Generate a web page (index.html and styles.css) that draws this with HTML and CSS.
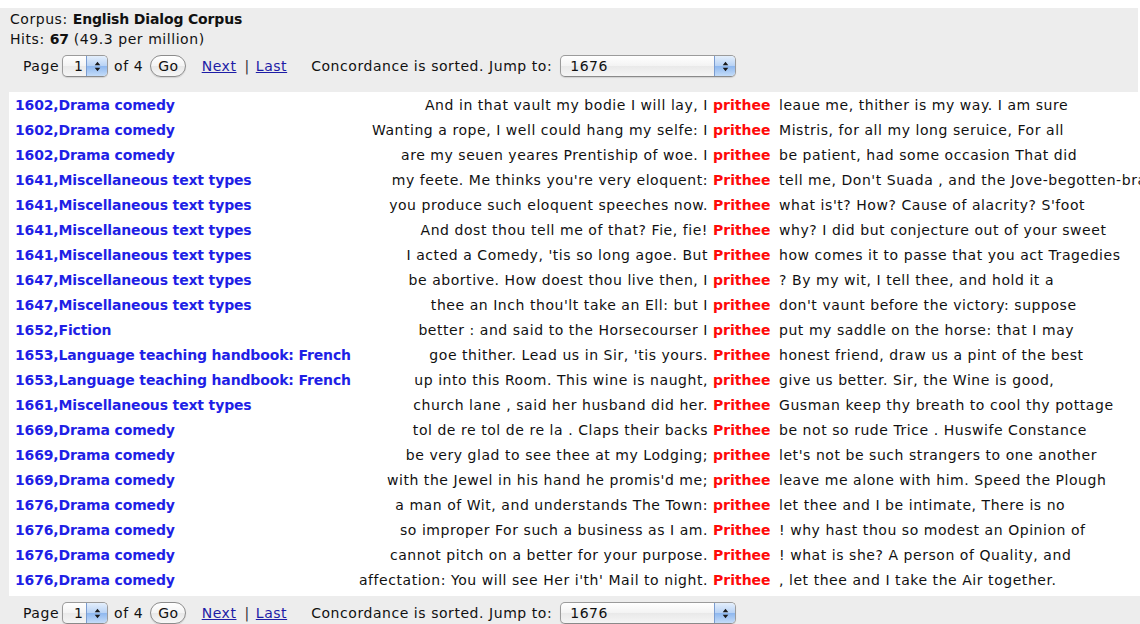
FILE: index.html
```html
<!DOCTYPE html>
<html lang="en">
<head>
<meta charset="utf-8">
<title>Concordance: prithee</title>
<link rel="stylesheet" href="styles.css">
</head>
<body>
<div class="summary">
  <div class="meta">Corpus: <b>English Dialog Corpus</b></div>
  <div class="meta">Hits: <b>67</b> (49.3 per million)</div>
  <div class="pager">
    <span>Page</span>
    <span class="select select-page"><span class="select-value">1</span><span class="select-spin"><svg width="7" height="11" viewBox="0 0 7 11"><path d="M3.5 0.8 L6.3 4.2 H0.7Z M0.7 6.8 H6.3 L3.5 10.2Z" fill="#1a1a1a"/></svg></span></span>
    <span class="of">of 4</span>
    <span class="btn-go">Go</span>
    <a class="nav nav-next" href="#next">Next</a>
    <span class="sep">|</span>
    <a class="nav" href="#last">Last</a>
    <span class="sorted">Concordance is sorted. Jump to:</span>
    <span class="select select-jump"><span class="select-value">1676</span><span class="select-spin"><svg width="7" height="11" viewBox="0 0 7 11"><path d="M3.5 0.8 L6.3 4.2 H0.7Z M0.7 6.8 H6.3 L3.5 10.2Z" fill="#1a1a1a"/></svg></span></span>
  </div>
</div>

<div class="results">
  <div class="sheet">
    <table class="kwic">
      <colgroup>
        <col class="c-src"><col class="c-left"><col class="c-kw"><col class="c-right">
      </colgroup>
      <tbody>
        <tr><td class="src"><a href="#">1602,Drama comedy</a></td><td class="left">And in that vault my bodie I will lay, I</td><td class="kw">prithee</td><td class="right">leaue me, thither is my way. I am sure</td></tr>
        <tr><td class="src"><a href="#">1602,Drama comedy</a></td><td class="left">Wanting a rope, I well could hang my selfe: I</td><td class="kw">prithee</td><td class="right">Mistris, for all my long seruice, For all</td></tr>
        <tr><td class="src"><a href="#">1602,Drama comedy</a></td><td class="left">are my seuen yeares Prentiship of woe. I</td><td class="kw">prithee</td><td class="right">be patient, had some occasion That did</td></tr>
        <tr><td class="src"><a href="#">1641,Miscellaneous text types</a></td><td class="left">my feete. Me thinks you're very eloquent:</td><td class="kw">Prithee</td><td class="right">tell me, Don't Suada , and the Jove-begotten-brain</td></tr>
        <tr><td class="src"><a href="#">1641,Miscellaneous text types</a></td><td class="left">you produce such eloquent speeches now.</td><td class="kw">Prithee</td><td class="right">what is't? How? Cause of alacrity? S'foot</td></tr>
        <tr><td class="src"><a href="#">1641,Miscellaneous text types</a></td><td class="left">And dost thou tell me of that? Fie, fie!</td><td class="kw">Prithee</td><td class="right">why? I did but conjecture out of your sweet</td></tr>
        <tr><td class="src"><a href="#">1641,Miscellaneous text types</a></td><td class="left">I acted a Comedy, 'tis so long agoe. But</td><td class="kw">Prithee</td><td class="right">how comes it to passe that you act Tragedies</td></tr>
        <tr><td class="src"><a href="#">1647,Miscellaneous text types</a></td><td class="left">be abortive. How doest thou live then, I</td><td class="kw">prithee</td><td class="right">? By my wit, I tell thee, and hold it a</td></tr>
        <tr><td class="src"><a href="#">1647,Miscellaneous text types</a></td><td class="left">thee an Inch thou'lt take an Ell: but I</td><td class="kw">prithee</td><td class="right">don't vaunt before the victory: suppose</td></tr>
        <tr><td class="src"><a href="#">1652,Fiction</a></td><td class="left">better : and said to the Horsecourser I</td><td class="kw">prithee</td><td class="right">put my saddle on the horse: that I may</td></tr>
        <tr><td class="src"><a href="#">1653,Language teaching handbook: French</a></td><td class="left">goe thither. Lead us in Sir, 'tis yours.</td><td class="kw">Prithee</td><td class="right">honest friend, draw us a pint of the best</td></tr>
        <tr><td class="src"><a href="#">1653,Language teaching handbook: French</a></td><td class="left">up into this Room. This wine is naught,</td><td class="kw">prithee</td><td class="right">give us better. Sir, the Wine is good,</td></tr>
        <tr><td class="src"><a href="#">1661,Miscellaneous text types</a></td><td class="left">church lane , said her husband did her.</td><td class="kw">Prithee</td><td class="right">Gusman keep thy breath to cool thy pottage</td></tr>
        <tr><td class="src"><a href="#">1669,Drama comedy</a></td><td class="left">tol de re tol de re la . Claps their backs</td><td class="kw">Prithee</td><td class="right">be not so rude Trice . Huswife Constance</td></tr>
        <tr><td class="src"><a href="#">1669,Drama comedy</a></td><td class="left">be very glad to see thee at my Lodging;</td><td class="kw">prithee</td><td class="right">let's not be such strangers to one another</td></tr>
        <tr><td class="src"><a href="#">1669,Drama comedy</a></td><td class="left">with the Jewel in his hand he promis'd me;</td><td class="kw">prithee</td><td class="right">leave me alone with him. Speed the Plough</td></tr>
        <tr><td class="src"><a href="#">1676,Drama comedy</a></td><td class="left">a man of Wit, and understands The Town:</td><td class="kw">prithee</td><td class="right">let thee and I be intimate, There is no</td></tr>
        <tr><td class="src"><a href="#">1676,Drama comedy</a></td><td class="left">so improper For such a business as I am.</td><td class="kw">Prithee</td><td class="right">! why hast thou so modest an Opinion of</td></tr>
        <tr><td class="src"><a href="#">1676,Drama comedy</a></td><td class="left">cannot pitch on a better for your purpose.</td><td class="kw">Prithee</td><td class="right">! what is she? A person of Quality, and</td></tr>
        <tr><td class="src"><a href="#">1676,Drama comedy</a></td><td class="left">affectation: You will see Her i'th' Mail to night.</td><td class="kw">Prithee</td><td class="right">, let thee and I take the Air together.</td></tr>
      </tbody>
    </table>
  </div>
</div>

<div class="footer">
  <div class="pager">
    <span>Page</span>
    <span class="select select-page"><span class="select-value">1</span><span class="select-spin"><svg width="7" height="11" viewBox="0 0 7 11"><path d="M3.5 0.8 L6.3 4.2 H0.7Z M0.7 6.8 H6.3 L3.5 10.2Z" fill="#1a1a1a"/></svg></span></span>
    <span class="of">of 4</span>
    <span class="btn-go">Go</span>
    <a class="nav nav-next" href="#next">Next</a>
    <span class="sep">|</span>
    <a class="nav" href="#last">Last</a>
    <span class="sorted">Concordance is sorted. Jump to:</span>
    <span class="select select-jump"><span class="select-value">1676</span><span class="select-spin"><svg width="7" height="11" viewBox="0 0 7 11"><path d="M3.5 0.8 L6.3 4.2 H0.7Z M0.7 6.8 H6.3 L3.5 10.2Z" fill="#1a1a1a"/></svg></span></span>
  </div>
</div>
</body>
</html>
```

FILE: styles.css
```css
html, body {
  overflow: hidden;
}

body {
  margin: 8px 0 0 0;
  background: #ffffff;
  color: #111111;
  font-family: "DejaVu Sans", Verdana, sans-serif;
  font-size: 14px;
  letter-spacing: 0.55px;
}

b {
  letter-spacing: -0.15px;
}

/* corpus summary block */
.summary {
  width: 1138px;
  box-sizing: border-box;
  background: #ededed;
  padding: 1px 0 15px 10px;
}

.meta {
  line-height: 20px;
  white-space: nowrap;
}

/* paging controls */
.pager {
  display: flex;
  align-items: center;
  height: 22px;
  line-height: 20px;
  white-space: nowrap;
}

.summary .pager {
  margin: 6px 0 0 13px;
}

.footer {
  background: #ededed;
  width: 1200px;
  padding: 6px 0 10px 23px;
}

.select {
  display: inline-flex;
  height: 22px;
  box-sizing: border-box;
  border: 1px solid #9b9b9b;
  border-bottom-color: #8a8a8a;
  border-radius: 5px;
  background: linear-gradient(#ffffff, #f3f3f3 50%, #e9e9e9 51%, #f5f5f5);
  box-shadow: 0 1px 1px rgba(0, 0, 0, 0.12);
  overflow: hidden;
  margin-left: 3px;
}

.select-page {
  width: 46px;
}

.select-jump {
  width: 176px;
  margin-left: 8px;
}

.select-value {
  flex: 1;
  padding-left: 11px;
  line-height: 20px;
}

.select-jump .select-value {
  padding-left: 9px;
}

.select-spin {
  width: 20px;
  display: flex;
  align-items: center;
  justify-content: center;
  border-left: 1px solid #7a9cd0;
  background: linear-gradient(#e4effc, #b9d3f5 48%, #8fb8ef 52%, #c4dcf8);
}

.of {
  margin-left: 6px;
}

.btn-go {
  margin-left: 7px;
  height: 22px;
  box-sizing: border-box;
  padding: 0 6px 0 7px;
  border: 1px solid #8c8c8c;
  border-radius: 11px;
  background: linear-gradient(#ffffff, #f4f4f4 50%, #e8e8e8 51%, #f7f7f7);
  box-shadow: 0 1px 1px rgba(0, 0, 0, 0.12);
  line-height: 20px;
}

.nav {
  color: #1d1da6;
  text-decoration: underline;
}

.nav-next {
  margin-left: 16px;
}

.sep {
  margin: 0 6px 0 8px;
  color: #333333;
}

.sorted {
  margin-left: 24px;
}

/* concordance lines */
.results {
  background: #ededed;
  padding-left: 9px;
  width: 1200px;
}

.sheet {
  background: #ffffff;
  padding: 1px 0 3px 0;
}

.kwic {
  border-collapse: collapse;
  table-layout: fixed;
  width: 1171px;
}

.c-src { width: 345px; }
.c-left { width: 356px; }
.c-kw { width: 66px; }
.c-right { width: 404px; }

.kwic td {
  height: 25px;
  padding: 0;
  line-height: 25px;
  white-space: nowrap;
  vertical-align: middle;
}

.kwic td.src {
  padding-left: 6px;
}

.kwic td.src a {
  color: #1f1fe6;
  font-weight: bold;
  letter-spacing: -0.15px;
  text-decoration: none;
}

.kwic td.left {
  text-align: right;
  padding-right: 2px;
}

.kwic td.kw {
  padding-left: 3px;
  color: #ff0a0a;
  font-weight: bold;
  letter-spacing: 0;
}

.kwic td.right {
  padding-left: 3px;
  overflow: hidden;
}
```
